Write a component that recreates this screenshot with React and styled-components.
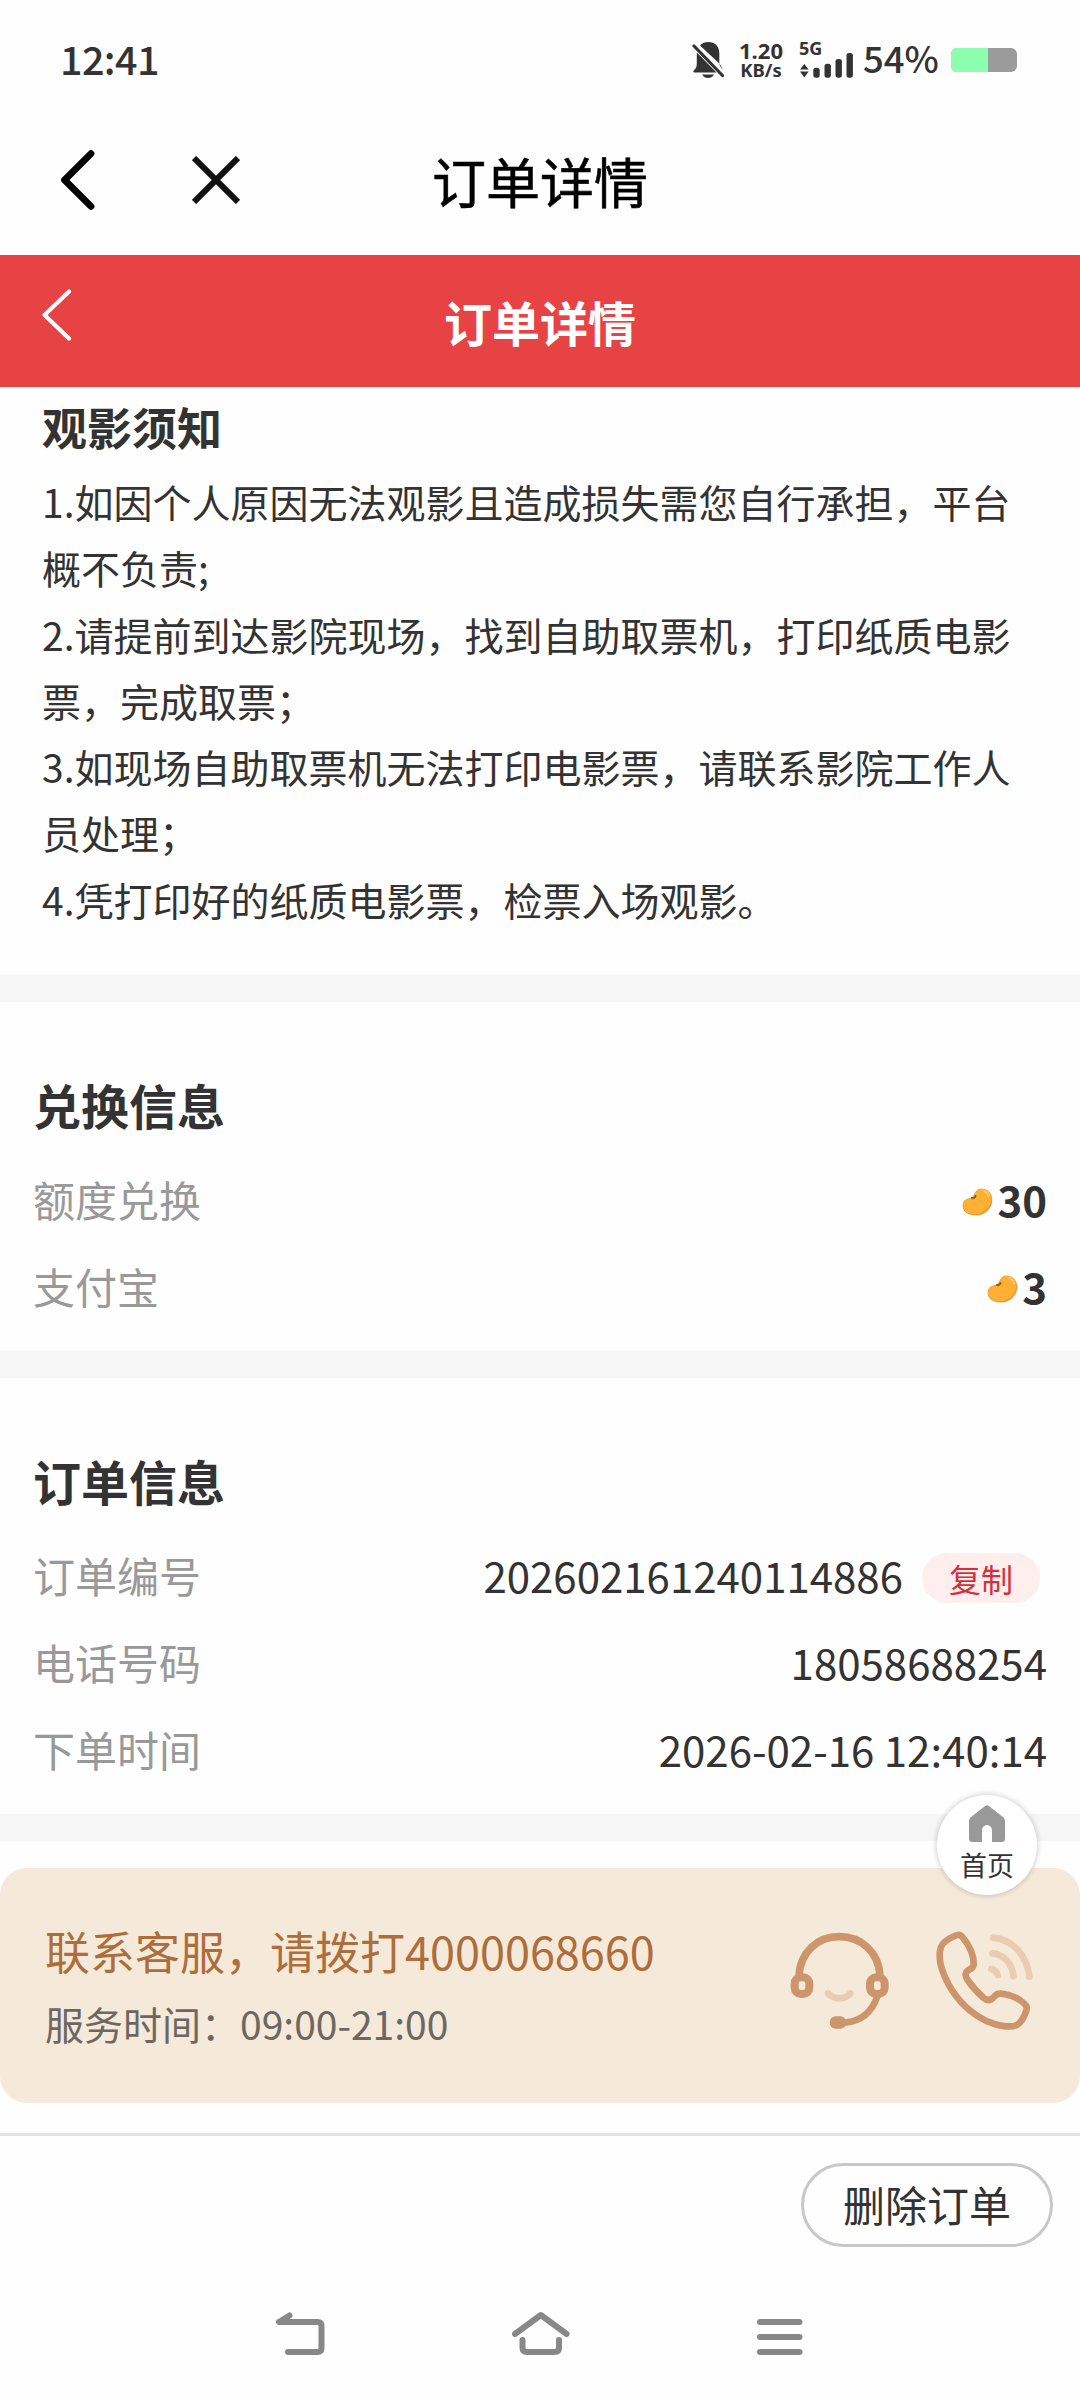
import React from 'react';
import styled, { createGlobalStyle } from 'styled-components';

const GlobalStyle = createGlobalStyle`
  * { box-sizing: border-box; }
  body { margin: 0; background: #fefefe; }
  svg { display: block; flex: none; }
`;

const Page = styled.div`
  width: 1080px;
  height: 2400px;
  overflow: hidden;
  display: flex;
  flex-direction: column;
  background: #fefefe;
  color: #333;
  font-family: "Noto Sans CJK SC", "Noto Sans", sans-serif;
  font-size: 42px;
`;

const StatusBar = styled.header`
  height: 105px;
  padding: 15px 63px 0 60px;
  display: flex;
  align-items: center;
  flex: none;
`;

const Clock = styled.div`
  flex: 1;
  font-size: 39.500px;
  line-height: 40px;
  font-weight: 500;
  letter-spacing: -0.6px;
  padding-bottom: 5px;
`;

const NetSpeed = styled.div`
  width: 50px;
  margin-left: 12px;
  font-family: "Noto Sans", sans-serif;
  font-weight: 700;
  text-align: center;
  white-space: nowrap;
`;

const SpeedLine = styled.div`
  height: 20.5px;
  line-height: 20.5px;
  font-size: ${(p) => p.$size}px;
`;

const Signal = styled.div`
  width: 54px;
  margin-left: 13px;
  display: flex;
  flex-direction: column;
`;

const Network = styled.div`
  font-family: "Noto Sans", sans-serif;
  font-weight: 700;
  font-size: 18px;
  line-height: 12px;
  height: 10px;
`;

const Percent = styled.div`
  width: 88px;
  margin-left: 10px;
  font-size: 36.5px;
  line-height: 40px;
  font-weight: 500;
  padding-bottom: 5px;
`;

const Battery = styled.div`
  width: 66px;
  height: 24px;
  border-radius: 6px;
  overflow: hidden;
  background: #9b9b9b;
`;

const Charge = styled.div`
  width: ${(p) => p.$level}%;
  height: 100%;
  background: #8cffae;
`;

const NavBar = styled.nav`
  height: 150px;
  flex: none;
  display: grid;
  grid-template-columns: 1fr auto 1fr;
  align-items: center;
`;

const NavActions = styled.div`
  display: flex;
  align-items: center;
  gap: 97px;
  padding-left: 61px;
`;

const NavTitle = styled.h1`
  margin: 0;
  color: #000;
  font-size: 54px;
  line-height: 60px;
  font-weight: 400;
  -webkit-text-stroke: 0.6px #000;
  padding-top: 1px;
`;

const Banner = styled.div`
  height: 132px;
  flex: none;
  display: grid;
  grid-template-columns: 1fr auto 1fr;
  align-items: center;
  padding: 0 42px;
  background: #e84344;
  color: #fff;
`;

const BannerBack = styled.div`
  padding-bottom: 13px;
`;

const BannerTitle = styled.h2`
  margin: 0;
  font-size: 48px;
  line-height: 60px;
  font-weight: 700;
`;

const Notice = styled.section`
  height: 588px;
  flex: none;
  padding: 7px 42px 0;
`;

const NoticeTitle = styled.h3`
  margin: 0 0 8px;
  font-size: 45px;
  line-height: 66px;
  font-weight: 700;
`;

const NoticeItem = styled.p`
  margin: 0;
  font-size: 39px;
  line-height: 66.3px;
`;

const Divider = styled.div`
  height: 27px;
  flex: none;
  background: #f6f6f6;
`;

const Section = styled.section`
  height: ${(p) => p.$height}px;
  flex: none;
  padding: 66px 33px 0;
`;

const SectionTitle = styled.h3`
  margin: 0 0 15px;
  font-size: 48px;
  line-height: 72px;
  font-weight: 700;
`;

const Row = styled.div`
  height: 87px;
  display: flex;
  align-items: center;
  justify-content: space-between;
`;

const Label = styled.span`
  color: #999;
`;

const Value = styled.span`
  display: flex;
  align-items: center;
  font-weight: ${(p) => (p.$strong ? 700 : 400)};
`;

const BeanSlot = styled.span`
  padding: 7px 4px 0 0;
`;

const CopyButton = styled.button`
  width: 118px;
  height: 50px;
  margin: 7px 7px 0 19px;
  padding: 0;
  border: 0;
  border-radius: 25px;
  background: #ffeeee;
  color: #d5303a;
  font: inherit;
  font-size: 32px;
  line-height: 48px;
`;

const Service = styled.section`
  height: 235px;
  flex: none;
  margin-top: 27px;
  padding: 0 45px 10px;
  display: flex;
  align-items: center;
  border-radius: 27px;
  background: #f5e9d9;
`;

const ServiceText = styled.div`
  flex: 1;
  padding-top: 12px;
`;

const Hotline = styled.div`
  color: #ad6e3c;
  font-size: 45px;
  line-height: 72px;
`;

const Hours = styled.div`
  color: #6d6761;
  font-size: 39px;
  line-height: 72px;
`;

const ServiceIcons = styled.div`
  display: flex;
  gap: 45px;
`;

const ActionBar = styled.div`
  height: 145px;
  flex: none;
  margin-top: 30px;
  padding: 27px 27px 0 0;
  border-top: 3px solid #e3e3e3;
  display: flex;
  justify-content: flex-end;
  align-items: flex-start;
`;

const DeleteButton = styled.button`
  width: 252px;
  height: 84px;
  padding: 0 0 2px;
  border: 3px solid #c8c8c8;
  border-radius: 42px;
  background: transparent;
  color: #333;
  font: inherit;
  font-size: 42px;
  line-height: 74px;
`;

const SystemNav = styled.footer`
  flex: 1;
  padding: 33px 277px 0 276px;
  display: flex;
  justify-content: space-between;
  align-items: flex-start;
`;

const HomeButton = styled.div`
  position: absolute;
  left: 937px;
  top: 1795px;
  width: 100px;
  height: 100px;
  border-radius: 50%;
  background: #fff;
  box-shadow: 0 0 4px 2px rgba(0, 0, 0, 0.13);
  display: flex;
  flex-direction: column;
  align-items: center;
  padding-top: 10px;
  font-size: 27px;
  line-height: 45px;
`;

const Bell = () => (
  <svg width="32" height="38" viewBox="0 0 32 38" fill="#333">
    <path d="M8 4.500C10 2 13 1 16.500 1c6.500 0 10.800 4.500 10.800 11v10.500zM4.800 11.500 24.500 31.500H2c-1-.4-.8-1.500 0-2.200 2.200-2 2.800-4 2.800-7zM10 33.500h12c-1.500 2.600-3.500 3.500-6 3.500s-4.500-1-6-3.500z" />
    <path d="M2 5l28.500 29.500" stroke="#333" strokeWidth="3.200" strokeLinecap="round" />
    <path d="M27.300 22c.3 3 1.500 4.500 3.700 7z" />
  </svg>
);

const Bars = () => (
  <svg width="54" height="26" viewBox="0 0 54 26" fill="#333">
    <path d="M5.300 12l4.300 5.600H1zM5.300 25.500L1 19.500h8.600z" />
    <rect x="14.300" y="15.700" width="6.400" height="10" rx="2.600" />
    <rect x="25.500" y="11.700" width="6.400" height="14" rx="2.600" />
    <rect x="36.500" y="7" width="6.400" height="18.700" rx="2.600" />
    <rect x="47.500" y="1" width="6.400" height="24.700" rx="2.600" />
  </svg>
);

const Back = () => (
  <svg width="34" height="60" viewBox="0 0 34 60" fill="none" stroke="#000" strokeWidth="6.800" strokeLinecap="round" strokeLinejoin="round">
    <path d="M30 3.600L3.600 30 30 56.400" />
  </svg>
);

const Close = () => (
  <svg width="48" height="48" viewBox="0 0 48 48" fill="none" stroke="#111" strokeWidth="6">
    <path d="M2 2l44 44M46 2L2 46" />
  </svg>
);

const SmallBack = () => (
  <svg width="30" height="52" viewBox="0 0 30 52" fill="none" stroke="#fff" strokeWidth="4.200" strokeLinecap="round" strokeLinejoin="round">
    <path d="M27 2.500L2.500 26 27 49.500" />
  </svg>
);

const Bean = () => (
  <svg width="31" height="28" viewBox="0 0 92 82">
    <path d="M52 2C72-2 90 12 90 34 90 60 68 81 42 81 16 81 0 68 2 49 4 34 14 31 26 29 38 26 38 5 52 2z" fill="#e39c3a" />
    <path d="M52 2C72-1 88 12 87 32 86 56 64 76 41 77 16 78 1 66 3 48 5 35 14 32 26 30 39 27 38 5 52 2z" fill="#fdb034" />
    <path d="M29 29c4 2 9 0 11-6" fill="none" stroke="#99591a" strokeWidth="6" strokeLinecap="round" />
    <path d="M66 9c8 2 13 8 14 15" fill="none" stroke="#ffc76a" strokeWidth="6" strokeLinecap="round" />
  </svg>
);

const Headset = () => (
  <svg width="100" height="100" viewBox="90 480 300 300" fill="none" stroke="#cd956b" strokeLinecap="round">
    <path d="M117 612C122 543 172 497 238 497S355 543 360 612" strokeWidth="23" strokeLinecap="butt" />
    <rect x="104" y="619" width="44" height="50" rx="19" strokeWidth="24" />
    <rect x="330" y="619" width="44" height="50" rx="19" strokeWidth="24" />
    <path d="M352 676C337 720 305 750 255 755" strokeWidth="20" />
    <rect x="209" y="736" width="50" height="37" rx="18" fill="#cd956b" stroke="none" />
    <path d="M204 667c18 20 48 20 67 0" stroke="#e9ccb2" strokeWidth="20" />
  </svg>
);

const Phone = () => (
  <svg width="100" height="100" viewBox="526 480 300 300" fill="none" stroke="#cd956b" strokeWidth="20" strokeLinecap="round" strokeLinejoin="round">
    <path d="M585 495Q600 487 609 499Q643 540 642 580Q641 590 631 595Q609 605 624 627Q643 655 672 681Q688 694 702 679Q711 666 725 668C752 671 780 684 795 699Q804 707 800 719C794 737 783 755 772 762C752 770 717 767 682 751C635 728 594 690 567 641C546 602 533 560 544 528C549 514 566 503 585 495Z" />
    <g stroke="#e9ccb2">
      <path d="M701 500C758 505 803 554 809 617" />
      <path d="M698 547C732 550 758 577 761 615" />
      <path d="M695 594Q710 597 714 612" />
    </g>
  </svg>
);

const House = () => (
  <svg width="36" height="37" viewBox="0 0 36 37" fill="#999">
    <path d="M15.800 1.200a3.500 3.500 0 0 1 4.400 0L34.500 12.500Q36 14 36 16v17.500q0 3.500-3.500 3.500H23V25.500a5 5.500 0 0 0-10 0V37H3.500Q0 37 0 33.500V16q0-2 1.500-3.500z" />
  </svg>
);

const sysIcon = { fill: 'none', stroke: '#888', strokeWidth: 6, strokeLinecap: 'round', strokeLinejoin: 'round' };

const SystemBack = () => (
  <svg width="49" height="46" viewBox="276 2311 49 46" {...sysIcon}>
    <path d="M289.500 2315.500l-10.500 6.500h38.500q4 0 4 4v22q0 4-4 4H288" />
  </svg>
);

const SystemHome = () => (
  <svg width="58" height="46" viewBox="511.500 2311 58 46" {...sysIcon}>
    <path d="M514.500 2334l25.800-19 25.800 19M522 2340v7.500q0 4.500 4.500 4.500h27.500q4.500 0 4.500-4.500V2340" />
  </svg>
);

const SystemMenu = () => (
  <svg width="46" height="46" viewBox="757.500 2311 46 46" {...sysIcon}>
    <path d="M760.500 2322h39.500M760.500 2337h39.500M760.500 2352h39.500" />
  </svg>
);

const notices = [
  '1.如因个人原因无法观影且造成损失需您自行承担，平台概不负责;',
  '2.请提前到达影院现场，找到自助取票机，打印纸质电影票，完成取票；',
  '3.如现场自助取票机无法打印电影票，请联系影院工作人员处理；',
  '4.凭打印好的纸质电影票，检票入场观影。',
];

const payments = [
  ['额度兑换', '30'],
  ['支付宝', '3'],
];

export default function App() {
  return (
    <Page>
      <GlobalStyle />
      <StatusBar>
        <Clock>12:41</Clock>
        <Bell />
        <NetSpeed>
          <SpeedLine $size={22}>1.20</SpeedLine>
          <SpeedLine $size={18.5}>KB/s</SpeedLine>
        </NetSpeed>
        <Signal>
          <Network>5G</Network>
          <Bars />
        </Signal>
        <Percent>54%</Percent>
        <Battery>
          <Charge $level={56} />
        </Battery>
      </StatusBar>
      <NavBar>
        <NavActions>
          <Back />
          <Close />
        </NavActions>
        <NavTitle>订单详情</NavTitle>
      </NavBar>
      <Banner>
        <BannerBack>
          <SmallBack />
        </BannerBack>
        <BannerTitle>订单详情</BannerTitle>
      </Banner>
      <Notice>
        <NoticeTitle>观影须知</NoticeTitle>
        {notices.map((text) => (
          <NoticeItem key={text}>{text}</NoticeItem>
        ))}
      </Notice>
      <Divider />
      <Section $height={349}>
        <SectionTitle>兑换信息</SectionTitle>
        {payments.map(([label, amount]) => (
          <Row key={label}>
            <Label>{label}</Label>
            <Value $strong>
              <BeanSlot>
                <Bean />
              </BeanSlot>
              {amount}
            </Value>
          </Row>
        ))}
      </Section>
      <Divider />
      <Section $height={436}>
        <SectionTitle>订单信息</SectionTitle>
        <Row>
          <Label>订单编号</Label>
          <Value>
            202602161240114886
            <CopyButton>复制</CopyButton>
          </Value>
        </Row>
        <Row>
          <Label>电话号码</Label>
          <Value>18058688254</Value>
        </Row>
        <Row>
          <Label>下单时间</Label>
          <Value>2026-02-16 12:40:14</Value>
        </Row>
      </Section>
      <Divider />
      <Service>
        <ServiceText>
          <Hotline>联系客服，请拨打4000068660</Hotline>
          <Hours>服务时间：09:00-21:00</Hours>
        </ServiceText>
        <ServiceIcons>
          <Headset />
          <Phone />
        </ServiceIcons>
      </Service>
      <ActionBar>
        <DeleteButton>删除订单</DeleteButton>
      </ActionBar>
      <SystemNav>
        <SystemBack />
        <SystemHome />
        <SystemMenu />
      </SystemNav>
      <HomeButton>
        <House />
        首页
      </HomeButton>
    </Page>
  );
}
